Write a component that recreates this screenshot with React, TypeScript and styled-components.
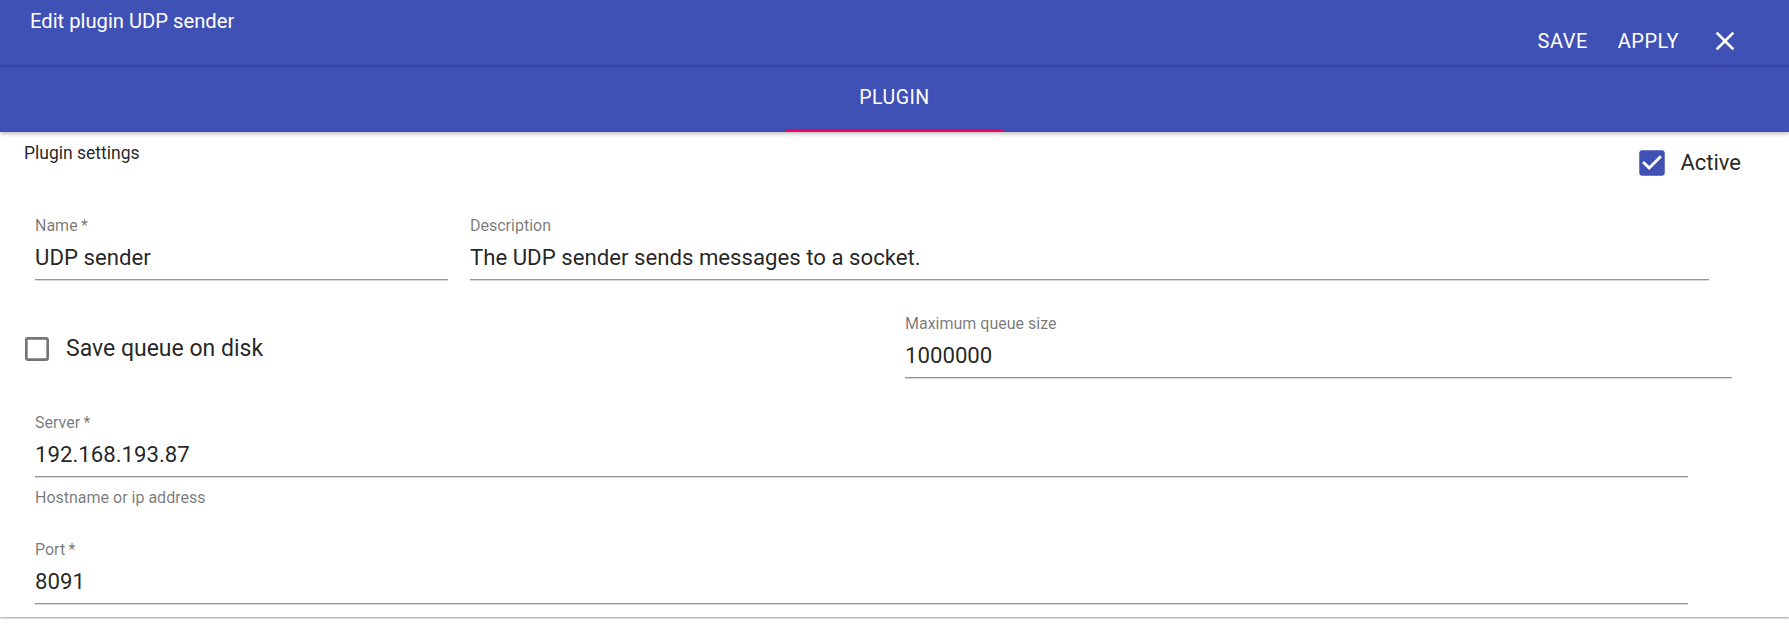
import React from 'react'
import styled, { createGlobalStyle } from 'styled-components'

const GlobalStyle = createGlobalStyle`
  body {
    margin: 0;
    background: #fff;
    font-family: Roboto, "Liberation Sans", Arial, sans-serif;
    color: rgba(0, 0, 0, 0.87);
  }
`

const Page = styled.div`
  height: 627px;
  overflow: hidden;
  display: flex;
  flex-direction: column;
`

const Header = styled.header`
  background: #3f51b5;
  color: #fff;
`

const TopRow = styled.div`
  position: relative;
  z-index: 2;
  height: 65px;
  display: flex;
  justify-content: space-between;
  box-shadow: 0 2px 3px rgba(0, 0, 0, 0.16);
`

const Title = styled.h2`
  margin: 0;
  padding: 9px 0 0 30px;
  font-size: 20.2px;
  font-weight: 400;
  line-height: 24px;
`

const Actions = styled.div`
  align-self: flex-end;
  height: 48px;
  display: flex;
  align-items: center;
  padding-right: 40px;
`

const ActionButton = styled.button`
  height: 48px;
  padding: 0 15px;
  border: 0;
  background: none;
  color: #fff;
  font-family: inherit;
  font-size: 20px;
  font-weight: 400;
  letter-spacing: 0.5px;
  text-transform: uppercase;
  cursor: pointer;
`

const CloseButton = styled.button`
  width: 48px;
  height: 48px;
  margin-left: 7px;
  padding: 0;
  border: 0;
  background: none;
  color: #fff;
  display: flex;
  align-items: center;
  justify-content: center;
  cursor: pointer;
`

const TabBar = styled.nav`
  position: relative;
  z-index: 1;
  height: 67px;
  display: flex;
  justify-content: center;
  box-shadow: 0 2px 4px rgba(0, 0, 0, 0.25);
`

const Tab = styled.div<{ active?: boolean }>`
  width: 219px;
  box-sizing: border-box;
  display: flex;
  align-items: center;
  justify-content: center;
  border-bottom: 3px solid ${p => (p.active ? '#f50057' : 'transparent')};
  font-size: 19.5px;
  font-weight: 400;
  letter-spacing: 0.5px;
  text-transform: uppercase;
`

const Body = styled.main`
  padding: 11px 48px 13px 24px;
  box-shadow: 0 1px 2px rgba(0, 0, 0, 0.4);
`

const SettingsHeader = styled.div`
  height: 73px;
  display: flex;
  justify-content: space-between;
  align-items: flex-start;
`

const SectionTitle = styled.div`
  font-size: 17.5px;
  line-height: 21px;
`

const CheckLabel = styled.label<{ offset?: number; size?: number; spacing?: number }>`
  display: inline-flex;
  align-items: center;
  gap: ${p => p.spacing ?? 17}px;
  margin-top: ${p => p.offset ?? 0}px;
  font-size: ${p => p.size ?? 22}px;
  line-height: 26px;
  cursor: pointer;
`

const FieldRow = styled.div<{ gap?: number; space?: number }>`
  display: flex;
  align-items: flex-start;
  gap: ${p => p.gap ?? 0}px;
  padding-left: 11px;
  margin-top: ${p => p.space ?? 0}px;
`

const SplitRow = styled(FieldRow)`
  display: grid;
  grid-template-columns: 870px 827px;
`

const Field = styled.div<{ width: number }>`
  width: ${p => p.width}px;
`

const Label = styled.div`
  height: 21px;
  padding-top: 2px;
  box-sizing: border-box;
  font-size: 16px;
  line-height: 16px;
  color: rgba(0, 0, 0, 0.54);
`

const Input = styled.div`
  padding: 8px 0 9px;
  font-size: 22.2px;
  line-height: 25px;
  border-bottom: 1px solid rgba(0, 0, 0, 0.42);
  box-shadow: 0 1px 0 rgba(0, 0, 0, 0.14);
`

const Helper = styled.div`
  margin-top: 13px;
  font-size: 16px;
  line-height: 16px;
  color: rgba(0, 0, 0, 0.54);
`

const CheckSvg = styled.svg<{ checked?: boolean; box: number }>`
  width: ${p => p.box}px;
  height: ${p => p.box}px;
  margin: -4px;
  fill: ${p => (p.checked ? '#3f51b5' : 'rgba(0, 0, 0, 0.54)')};
`

const CheckIcon = ({ checked, box = 32 }: { checked?: boolean; box?: number }) => (
  <CheckSvg viewBox="0 0 24 24" checked={checked} box={box}>
    {checked ? (
      <path d="M19 3H5c-1.11 0-2 .9-2 2v14c0 1.1.89 2 2 2h14c1.11 0 2-.9 2-2V5c0-1.1-.89-2-2-2zm-9 14l-5-5 1.41-1.41L10 14.17l7.59-7.59L19 8l-9 9z" />
    ) : (
      <path d="M19 5v14H5V5h14m0-2H5c-1.1 0-2 .9-2 2v14c0 1.1.9 2 2 2h14c1.1 0 2-.9 2-2V5c0-1.1-.9-2-2-2z" />
    )}
  </CheckSvg>
)

const CloseIcon = () => (
  <svg width="32" height="32" viewBox="0 0 24 24" fill="currentColor">
    <path d="M19 6.41L17.59 5 12 10.59 6.41 5 5 6.41 10.59 12 5 17.59 6.41 19 12 13.41 17.59 19 19 17.59 13.41 12z" />
  </svg>
)

const QueueCheck = styled(CheckLabel)`
  margin-left: -10px;
`

interface TextFieldProps {
  label: string
  value: string
  width: number
  required?: boolean
  helper?: string
}

const TextField = ({ label, value, width, required, helper }: TextFieldProps) => (
  <Field width={width}>
    <Label>
      {label}
      {required && '\u2009*'}
    </Label>
    <Input>{value}</Input>
    {helper && <Helper>{helper}</Helper>}
  </Field>
)

const App = () => (
  <Page>
    <GlobalStyle />
    <Header>
      <TopRow>
        <Title>Edit plugin UDP sender</Title>
        <Actions>
          <ActionButton>Save</ActionButton>
          <ActionButton>Apply</ActionButton>
          <CloseButton aria-label="close">
            <CloseIcon />
          </CloseButton>
        </Actions>
      </TopRow>
      <TabBar>
        <Tab active>Plugin</Tab>
      </TabBar>
    </Header>
    <Body>
      <SettingsHeader>
        <SectionTitle>Plugin settings</SectionTitle>
        <CheckLabel offset={7} spacing={15}>
          <CheckIcon checked box={34} />
          Active
        </CheckLabel>
      </SettingsHeader>
      <FieldRow gap={22}>
        <TextField label="Name" required value="UDP sender" width={413} />
        <TextField
          label="Description"
          value="The UDP sender sends messages to a socket."
          width={1239}
        />
      </FieldRow>
      <SplitRow space={34}>
        <QueueCheck offset={22} size={23}>
          <CheckIcon />
          Save queue on disk
        </QueueCheck>
        <TextField label="Maximum queue size" value="1000000" width={827} />
      </SplitRow>
      <FieldRow space={35}>
        <TextField
          label="Server"
          required
          value="192.168.193.87"
          width={1653}
          helper="Hostname or ip address"
        />
      </FieldRow>
      <FieldRow space={34}>
        <TextField label="Port" required value="8091" width={1653} />
      </FieldRow>
    </Body>
  </Page>
)

export default App
